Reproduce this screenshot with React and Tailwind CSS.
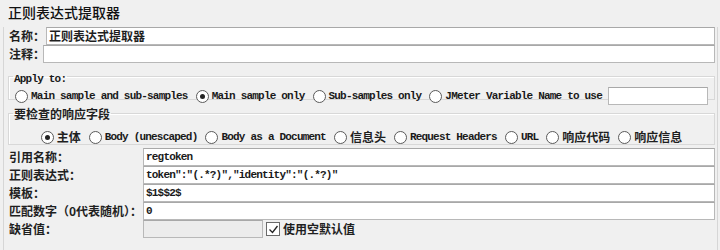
import React from 'react';

const mono = "font-['Liberation_Mono','Noto_Sans_CJK_SC',monospace] text-[11px] tracking-[-0.8px] font-bold text-[#1a1a1a]";
const cjk = "font-['Noto_Sans_CJK_SC',sans-serif] text-[12px] font-bold text-[#1f1f1f]";

const isCjk = (s) => /[\u4e00-\u9fff]/.test(s);

const Label = ({ text }) => (
  <span className={`${isCjk(text) ? cjk : mono} leading-[16px] whitespace-nowrap`}>{text}</span>
);

const Radio = ({ label, checked }) => (
  <div className="flex items-center gap-[3px] h-[18px]">
    <span className="w-[13px] h-[13px] rounded-full border border-[#5a5a5a] bg-white flex items-center justify-center">
      {checked && <span className="w-[5px] h-[5px] rounded-full bg-[#222]" />}
    </span>
    <Label text={label} />
  </div>
);

const Field = ({ value, grey, className = '' }) => (
  <div
    className={`h-[18px] border border-[#b8b8b8] border-t-[#a8a8a8] ${grey ? 'bg-[#ececec]' : 'bg-white'} flex items-center pl-[2px] ${className}`}
  >
    {value && <Label text={value} />}
  </div>
);

const applyTo = [
  { label: 'Main sample and sub-samples' },
  { label: 'Main sample only', checked: true },
  { label: 'Sub-samples only' },
  { label: 'JMeter Variable Name to use' },
];

const fields = [
  { label: '主体', checked: true },
  { label: 'Body (unescaped)' },
  { label: 'Body as a Document' },
  { label: '信息头' },
  { label: 'Request Headers' },
  { label: 'URL' },
  { label: '响应代码' },
  { label: '响应信息' },
];

const rows = [
  { label: '引用名称：', value: 'regtoken' },
  { label: '正则表达式：', value: 'token":"(.*?)","identity":"(.*?)"' },
  { label: '模板：', value: '$1$$2$' },
  { label: '匹配数字（0代表随机）：', value: '0' },
];

export default function App() {
  return (
    <div className="w-[720px] h-[250px] bg-[#f0f0f0] overflow-hidden">
      <div className="h-[26px] pl-[8px] pt-[2px] font-['Noto_Sans_CJK_SC',sans-serif] text-[14px] leading-[20px] font-medium text-[#111]">
        正则表达式提取器
      </div>

      <div className="ml-[3px] w-[715px] h-[224px] border-l border-r border-[#d6d6d6] pl-[5px] pr-[2px]">
        <div className="flex items-center h-[18px] mt-[1px]">
          <span className={`${cjk} w-[37px] shrink-0 whitespace-nowrap`}>名称：</span>
          <Field value="正则表达式提取器" className="flex-1" />
        </div>
        <div className="flex items-center h-[18px]">
          <span className={`${cjk} w-[34px] shrink-0 whitespace-nowrap`}>注释：</span>
          <Field className="flex-1 relative" />
        </div>

        <fieldset className="-ml-[1px] border border-[#d8d8d8] shadow-[inset_1px_1px_0_#fff] h-[36px] mt-[1px]">
          <legend className="ml-[4px] px-[1px]">
            <Label text="Apply to:" />
          </legend>
          <div className="flex items-center justify-center gap-[8px] -mt-[1px]">
            {applyTo.map((r) => (
              <Radio key={r.label} {...r} />
            ))}
            <Field className="w-[100px] -ml-[2px]" />
          </div>
        </fieldset>

        <fieldset className="-ml-[1px] border border-[#d8d8d8] shadow-[inset_1px_1px_0_#fff] h-[44px] mt-[1px]">
          <legend className="ml-[4px] px-[1px]">
            <Label text="要检查的响应字段" />
          </legend>
          <div className="flex items-center justify-center gap-[8px] mt-[3px]">
            {fields.map((r) => (
              <Radio key={r.label} {...r} />
            ))}
          </div>
        </fieldset>

        <div className="mt-[3px] grid grid-cols-[134px_1fr]">
          {rows.map((r) => (
            <React.Fragment key={r.label}>
              <div className="h-[18px] flex items-center">
                <Label text={r.label} />
              </div>
              <Field value={r.value} />
            </React.Fragment>
          ))}
          <div className="h-[18px] flex items-center">
            <Label text="缺省值：" />
          </div>
          <div className="flex items-center gap-[3px]">
            <Field grey className="w-[120px]" />
            <span className="w-[14px] h-[14px] border border-[#6a6a6a] bg-white flex items-center justify-center">
              <svg width="11" height="11" viewBox="0 0 11 11">
                <path d="M1.5 5.5 L4.5 8.5 L9.5 2" fill="none" stroke="#222" strokeWidth="1.3" />
              </svg>
            </span>
            <Label text="使用空默认值" />
          </div>
        </div>
      </div>
    </div>
  );
}
